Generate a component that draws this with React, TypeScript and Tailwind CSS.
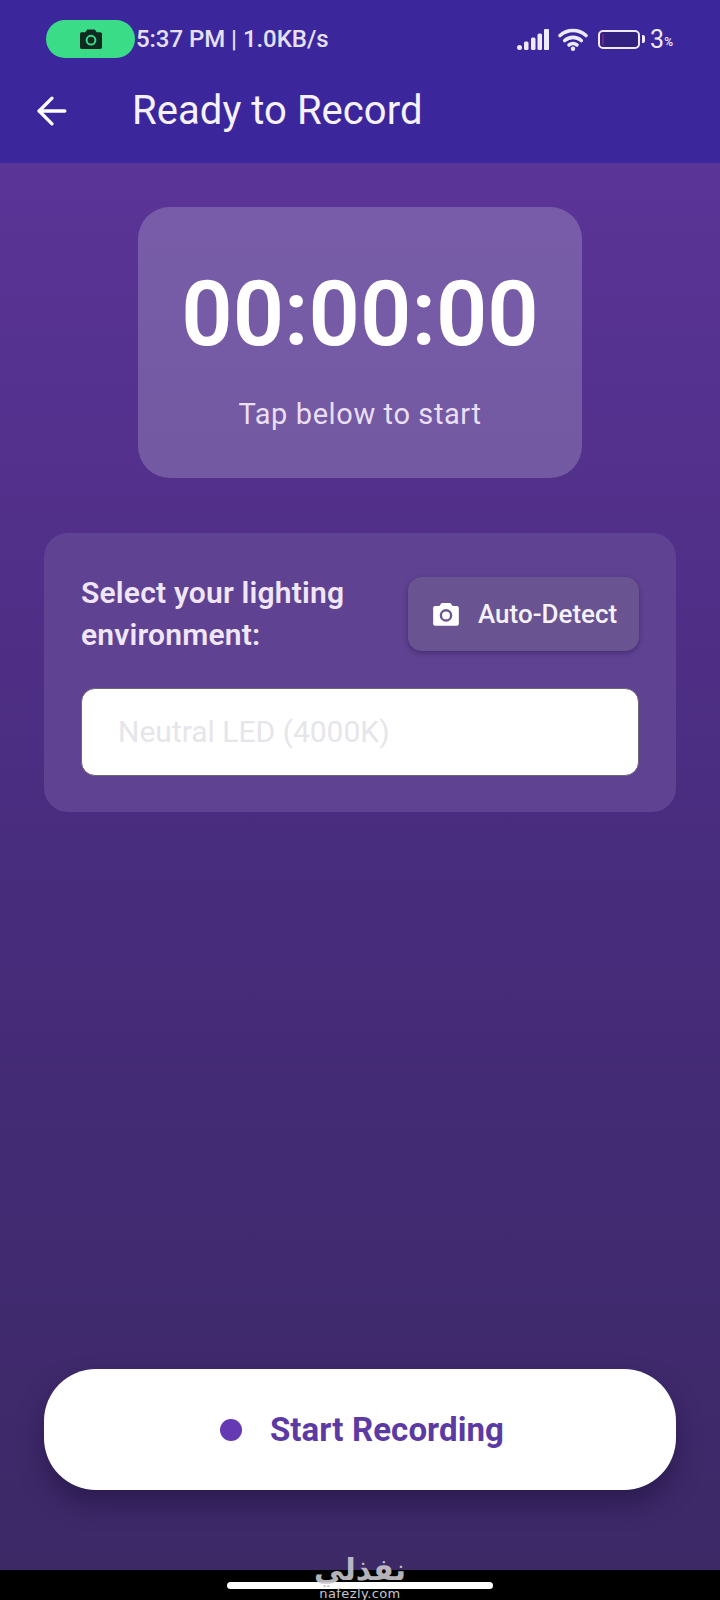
import React from 'react';
import { ArrowLeft } from 'lucide-react';

const CameraGlyph: React.FC<{ body: string; ring: string; className: string }> = ({ body, ring, className }) => (
  <svg viewBox="0 0 24 22" className={className}>
    <path
      d="M8.2 1.5h7.6l1.9 2.7h3.6c1 0 1.7.8 1.7 1.7v13.4c0 1-.8 1.7-1.7 1.700H2.700c-1 0-1.700-.8-1.700-1.700V5.900c0-1 .8-1.700 1.700-1.700h3.600z"
      fill={body}
    />
    <circle cx="12" cy="12.2" r="4.4" fill="none" stroke={ring} strokeWidth="2" />
  </svg>
);

const StatusIcons: React.FC = () => (
  <div className="flex items-center">
    <svg viewBox="0 0 32 21" className="w-[32px] h-[21px]" fill="#efe9fb">
      <rect x="0" y="16" width="5" height="5" rx="2.500" />
      <rect x="7" y="12.500" width="4.500" height="8.500" rx="1.500" />
      <rect x="14" y="8.500" width="4.500" height="12.500" rx="1.500" />
      <rect x="20.500" y="4.500" width="4.500" height="16.500" rx="1.500" />
      <rect x="27" y="0" width="5" height="21" rx="1" />
    </svg>
    <svg viewBox="0 0 30 23" className="ml-[9px] w-[30px] h-[23px]" fill="none" stroke="#efe9fb" strokeWidth="3.600" strokeLinecap="round">
      <path d="M2 7.500C9.500 .8 20.500 .8 28 7.500" />
      <path d="M6.700 12.500c4.800-4.200 11.800-4.200 16.600 0" />
      <path d="M11 17c2.400-1.800 5.600-1.800 8 0" />
      <circle cx="15" cy="20.700" r="2.200" fill="#efe9fb" stroke="none" />
    </svg>
    <div className="ml-[10px] w-[42px] h-[19px] rounded-[5px] border-2 border-[#efe9fb] bg-[#33217f] flex items-center pl-[2px]">
      <div className="w-[2px] h-[11px] bg-[#6a2680]" />
    </div>
    <div className="ml-[2px] w-[3px] h-[8px] rounded-r-[2px] bg-[#efe9fb]" />
    <span className="ml-[5px] text-[25px] leading-none text-[#efe9fb]">3</span>
    <span className="mt-[6px] text-[12px] leading-none font-medium text-[#efe9fb]">%</span>
  </div>
);

const App: React.FC = () => {
  return (
    <div className="w-[720px] h-[1600px] flex flex-col overflow-hidden font-['Roboto',sans-serif]">
      {/* Header */}
      <header className="h-[163px] shrink-0 bg-[#3b279b] flex flex-col">
        <div className="flex items-center h-[38px] mt-[20px] pl-[46px] pr-[47px]">
          <div className="w-[89px] h-[38px] rounded-full bg-[#3bdc88] flex items-center justify-center">
            <CameraGlyph body="#0f2a20" ring="#3bdc88" className="w-[24px] h-[22px]" />
          </div>
          <span className="ml-[1px] text-[24px] leading-none font-medium tracking-[-0.05px] text-[#e6e0f7]">5:37 PM | 1.0KB/s</span>
          <div className="ml-auto">
            <StatusIcons />
          </div>
        </div>
        <div className="flex items-center h-[52px] mt-[27px] pl-[30px]">
          <ArrowLeft className="w-[44px] h-[44px] text-white" strokeWidth={1.8} />
          <h1 className="ml-[58px] text-[40px] leading-none font-normal tracking-[0.05px] text-[#f6f2fd]">Ready to Record</h1>
        </div>
      </header>

      {/* Body */}
      <main className="flex-1 min-h-0 flex flex-col items-center bg-gradient-to-b from-[#5b3497] via-[#482c7d] to-[#3c2966] px-[44px]">
        <section className="mt-[44px] w-[444px] h-[271px] rounded-[32px] bg-gradient-to-b from-[#785ca9] to-[#7259a1] flex flex-col items-center">
          <div className="mt-[56px] text-[90px] leading-[104px] font-semibold text-white">00:00:00</div>
          <div className="mt-[30px] text-[29px] leading-[34px] tracking-[0.6px] text-[#eadff5]">Tap below to start</div>
        </section>

        <section className="mt-[55px] w-full h-[279px] rounded-[24px] bg-[#5f4291] pl-[37px] pr-[37px] pt-[39px]">
          <div className="flex items-start justify-between">
            <div className="text-[30px] leading-[42px] font-semibold tracking-[0.2px] text-[#f0e6f8]">
              Select your lighting
              <br />
              environment:
            </div>
            <button className="mt-[5px] w-[231px] h-[74px] shrink-0 rounded-[14px] bg-[#695391] shadow-[0_2px_5px_rgba(40,20,80,0.45)] flex items-center pl-[24px]">
              <CameraGlyph body="#ffffff" ring="#695391" className="w-[28px] h-[26px]" />
              <span className="ml-[18px] text-[26px] leading-none font-medium text-[#f6f2fb]">Auto-Detect</span>
            </button>
          </div>
          <div className="mt-[32px] h-[88px] rounded-[14px] bg-white border border-[#6f6578] flex items-center pl-[36px]">
            <span className="text-[30px] leading-none text-[#e6e5ea]">Neutral LED (4000K)</span>
          </div>
        </section>

        <button className="mt-auto mb-[80px] w-full h-[121px] pl-[4px] rounded-[52px] bg-white shadow-[0_14px_24px_rgba(28,14,60,0.5)] flex items-center justify-center">
          <span className="w-[22px] h-[22px] rounded-full bg-[#6539b4]" />
          <span className="ml-[28px] text-[33px] tracking-[0.1px] leading-none font-bold text-[#5c3aa4]">Start Recording</span>
        </button>
      </main>

      {/* Nav bar with watermark */}
      <footer className="relative h-[30px] shrink-0 bg-black flex justify-center">
        <div className="mt-[12px] w-[266px] h-[7px] rounded-full bg-white" />
        <div className="absolute left-0 right-0 top-[-18px] flex flex-col items-center text-[#c8c6cc]">
          <span dir="rtl" className="font-['DejaVu_Sans',sans-serif] text-[30px] leading-[36px] font-bold opacity-90">نفذلي</span>
          <span className="font-['DejaVu_Sans',sans-serif] text-[13px] leading-[12px] tracking-[0.4px]">nafezly.com</span>
        </div>
      </footer>
    </div>
  );
};

export default App;
